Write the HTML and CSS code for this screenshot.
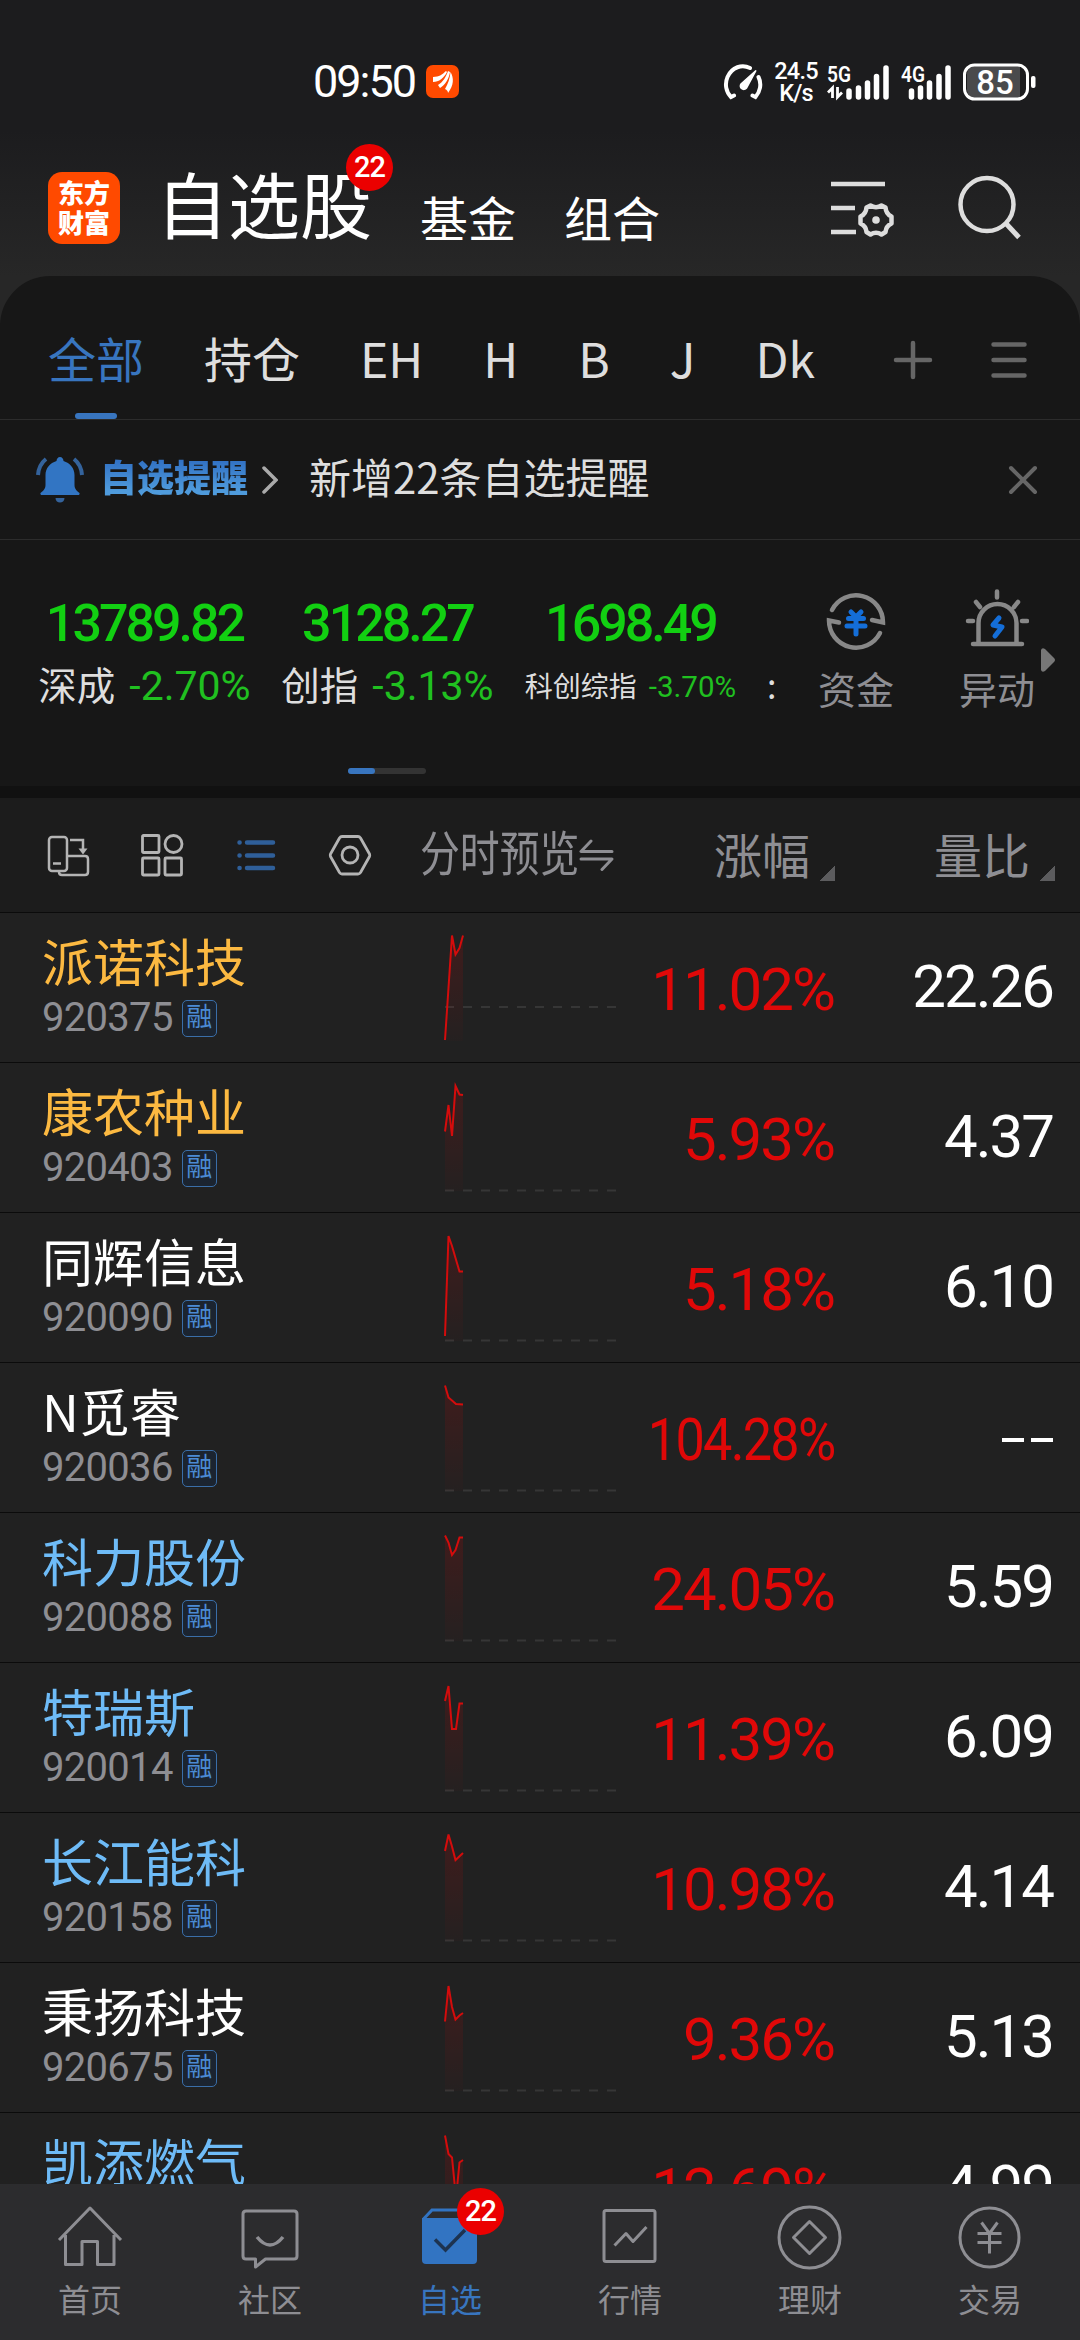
FILE: index.html
```html
<!DOCTYPE html>
<html lang="zh-CN">

<head>
    <meta charset="UTF-8">
    <meta name="viewport" content="width=device-width, initial-scale=1.0">
    <title>自选股</title>
    <link rel="stylesheet" href="styles.css">
</head>

<body>
    <div class="app">
        <div class="top">
            <div class="status-bar">
                <div class="status-time num">09:50</div>
                <svg class="status-app" width="33" height="33" viewBox="0 0 33 33">
                    <rect width="33" height="33" rx="7" fill="#ff4a00" />
                    <path d="M7 12 C13 12 17 9 20 6 L21 7 C18 13 13 17 7 17Z M12 20 C17 17 20 12 22 6 L24 7 C23 14 19 20 14 23Z M19 24 C22 19 24 13 24.500 7 C28 13 28 20 22 28 C22 26 21 25 19 24Z" fill="#fff" />
                </svg>
                <svg class="status-speed" width="40" height="36" viewBox="0 0 40 36" fill="none" stroke="#fff" stroke-width="4" stroke-linecap="round">
                    <path d="M11 31.500 L8 33 C3 28 1.500 20 4.500 13 C9 3 19 0 27 4" />
                    <path d="M35.500 13 C39 20 37 28 32.500 33 L29.500 31.500" />
                    <path d="M33 6.500 L23.500 24 A3 3 0 0 1 18 20 Z" fill="#fff" stroke-width="1.500" />
                </svg>
                <div class="net-speed num"><span>24.5</span><span>K/s</span></div>
                <svg class="signal" width="62" height="50" viewBox="0 -7 62 50">
                    <text class="signal-text" x="0" y="17.500" textLength="24" lengthAdjust="spacingAndGlyphs">5G</text>
                    <path d="M5.500 34V24L1 28.500M10.500 23v10L15 28.500" stroke="#fff" stroke-width="2.800" fill="none" />
                    <path d="M22 27v6M31.500 24v9M40.500 19v14M49.500 12.500v20.500M59 4v29" stroke="#fff" stroke-width="5.500" stroke-linecap="round" />
                </svg>
                <svg class="signal" width="50" height="50" viewBox="0 -7 50 50">
                    <text class="signal-text" x="0" y="17.500" textLength="24" lengthAdjust="spacingAndGlyphs">4G</text>
                    <path d="M10.500 27v6M19.500 24v9M28.500 19v14M38 12.500v20.500M47 4v29" stroke="#fff" stroke-width="5.500" stroke-linecap="round" />
                </svg>
                <svg class="battery" width="74" height="38" viewBox="0 0 74 38">
                    <path d="M12 3h45v32h-45a8 8 0 0 1-8-8v-16a8 8 0 0 1 8-8z" fill="#4a4a4c" />
                    <rect x="1.500" y="2" width="63" height="34" rx="10" fill="none" stroke="#fff" stroke-width="3" />
                    <rect x="68" y="13" width="4.500" height="12" rx="2" fill="#fff" />
                    <text class="battery-text" x="32" y="30.500" text-anchor="middle">85</text>
                </svg>
            </div>

            <div class="header">
                <div class="logo"><span>东方</span><span>财富</span></div>
                <div class="title">自选股<span class="badge num">22</span></div>
                <div class="sub-title">基金</div>
                <div class="sub-title">组合</div>
                <svg class="icon-filter" width="66" height="60" viewBox="0 0 66 60" fill="none" stroke="#ddd" stroke-width="4.500">
                    <path d="M0 6h54M0 30h24M0 54h25" />
                    <path d="M39.500 27.500 Q45 31 50.500 27.500 L54.500 29.500 Q55 36 60.500 38.500 L60.500 45.500 Q55 48 54.500 54 L50.500 56.500 Q45 53 39.500 56.500 L35.500 54 Q35 48 29.500 45.500 L29.500 38.500 Q35 36 35.500 29.500 Z" stroke-linejoin="round" />
                    <circle cx="45" cy="42" r="3.800" fill="#ddd" stroke="none" />
                </svg>
                <svg class="icon-search" width="64" height="66" viewBox="0 0 64 66" fill="none" stroke="#ddd" stroke-width="4.500">
                    <circle cx="29" cy="29.500" r="26.500" />
                    <path d="M48 48.500l13 14" stroke-width="5" />
                </svg>
            </div>
        </div>

        <div class="panel">
            <div class="tabs">
                <div class="tab active">全部</div>
                <div class="tab">持仓</div>
                <div class="tab">EH</div>
                <div class="tab">H</div>
                <div class="tab">B</div>
                <div class="tab">J</div>
                <div class="tab">Dk</div>
                <svg class="icon-plus" width="40" height="40" viewBox="0 0 40 40" stroke="#666" stroke-width="4.500" stroke-linecap="round">
                    <path d="M3 20h34M20 3v34" />
                </svg>
                <svg class="icon-menu" width="36" height="40" viewBox="0 0 36 40" stroke="#666" stroke-width="4.500" stroke-linecap="round">
                    <path d="M2.500 4.500h31M2.500 20h31M2.500 35.500h31" />
                </svg>
            </div>

            <div class="notice">
                <svg class="icon-bell" width="48" height="48" viewBox="0 0 48 48" fill="#3275c3">
                    <path d="M24 1 C26 1 27.500 3 27.500 5 C34 7 38.500 12 38.500 19 V29 C38.500 33 41 35 43.500 37 C44 38.500 43 39 42 39 H6 C5 39 4 38.500 4.500 37 C7 35 9.500 33 9.500 29 V19 C9.500 12 14 7 20.500 5 C20.500 3 22 1 24 1Z" />
                    <path d="M19.500 42h9c0 6-9 6-9 0z" fill="#34639c" />
                    <path d="M10 3C5 7 2.500 12 2 19M38 3c5 4 7.500 9 8 16" fill="none" stroke="#34639c" stroke-width="4" />
                </svg>
                <div class="notice-title">自选提醒</div>
                <svg class="icon-arrow" width="16" height="28" viewBox="0 0 16 28" fill="none" stroke="#aaa" stroke-width="3.500" stroke-linecap="round">
                    <path d="M2 2l12 12L2 26" />
                </svg>
                <div class="notice-text">新增22条自选提醒</div>
                <svg class="icon-close" width="30" height="30" viewBox="0 0 30 30" stroke="#666" stroke-width="4" stroke-linecap="round">
                    <path d="M3 3l24 24M27 3L3 27" />
                </svg>
            </div>

            <div class="indices">
                <div class="index-list">
                    <div class="index">
                        <div class="index-value num">13789.82</div>
                        <div class="index-info">深成<span class="num">-2.70%</span></div>
                    </div>
                    <div class="index">
                        <div class="index-value num">3128.27</div>
                        <div class="index-info">创指<span class="num">-3.13%</span></div>
                    </div>
                    <div class="index">
                        <div class="index-value num">1698.49</div>
                        <div class="index-info small">科创综指<span class="num">-3.70%</span></div>
                    </div>
                    <div class="index-cut">:</div>
                </div>
                <div class="tool">
                    <svg width="64" height="64" viewBox="0 0 64 64" fill="none" stroke="#888" stroke-width="4.500" stroke-linecap="round">
                        <path d="M8 21 A27 27 0 0 1 59 33.500 L48 31" />
                        <path d="M56 44 A27 27 0 0 1 5 31.500 L15 33.500" />
                        <path d="M27 23l5 5 5-5M24.500 29.500h15M23 37h18M32 29v16" stroke="#146ed8" stroke-width="5" />
                    </svg>
                    <span>资金</span>
                </div>
                <div class="tool">
                    <svg width="64" height="64" viewBox="0 0 64 64" fill="none" stroke="#888" stroke-width="4.500" stroke-linecap="round">
                        <path d="M13.500 53V34a19 19 0 0 1 38 0v19M8 55h49M32 2.500v6M11 13l4 5M53 13l-4 5M3 32h5M57 32h5" />
                        <path d="M34 29l-6 7 9 2-7 9" stroke="#146ed8" stroke-width="5" stroke-linejoin="round" />
                    </svg>
                    <span>异动</span>
                </div>
                <svg class="icon-more" width="16" height="26" viewBox="0 0 16 26">
                    <path d="M1 3 Q2 0 5 2 L14 11 Q16 13 14 15 L5 24 Q2 26 1 23Z" fill="#777" />
                </svg>
                <div class="pager"><div class="pager-on"></div></div>
            </div>
        </div>

        <div class="toolbar">
            <div class="views">
                <svg width="44" height="44" viewBox="0 0 44 44" fill="none" stroke="#b4b4b4" stroke-width="2.500">
                    <rect x="3" y="4" width="18" height="34" rx="3" />
                    <path d="M7 30.500h8M24 7h13v11M13 39v0q0 3 3 3h23q3 0 3-3V26q0-3-3-3H22" />
                    <path d="M32.500 15.500h9l-4.500 6z" fill="#b4b4b4" stroke="none" />
                </svg>
                <svg width="44" height="44" viewBox="0 0 44 44" fill="none" stroke="#b4b4b4" stroke-width="2.800">
                    <rect x="2.500" y="2.500" width="16.500" height="17" rx="1" />
                    <ellipse cx="33.500" cy="11" rx="8.500" ry="8.500" />
                    <rect x="2.500" y="25" width="16.500" height="17" rx="1" />
                    <rect x="25" y="25" width="16.500" height="17" rx="1" />
                </svg>
                <svg width="44" height="44" viewBox="0 0 44 44" fill="none" stroke="#2f5f99" stroke-width="4.500" stroke-linecap="round">
                    <path d="M5.500 9.500h.1M13 9.500h26M5.500 22.500h.1M13 22.500h26M5.500 35h.1M13 35h26" />
                </svg>
                <svg width="44" height="44" viewBox="0 0 44 44" fill="none" stroke="#b4b4b4" stroke-width="2.800" stroke-linejoin="round">
                    <path d="M14 3.500h16q1.500 0 2.500 1.500l9 16q.5 1.500 0 2.500l-9 16q-1 1.500-2.500 1.500H14q-1.500 0-2.500-1.500l-9-16q-.5-1.500 0-2.500l9-16q1-1.500 2.500-1.500z" />
                    <circle cx="22" cy="22" r="8" />
                </svg>
            </div>
            <div class="preview"><span>分时预览</span>
                <svg width="36" height="34" viewBox="0 0 36 34" fill="none" stroke="#8e8e93" stroke-width="3" stroke-linejoin="round" stroke-linecap="round">
                    <path d="M12 3L2 13.500h31M2 21h31L23 31.500" />
                </svg>
            </div>
            <div class="sort sort-change"><span>涨幅</span><i class="corner"></i></div>
            <div class="sort sort-ratio"><span>量比</span><i class="corner"></i></div>
        </div>

        <div class="list">
            <svg class="defs" width="0" height="0">
                <linearGradient id="fade" gradientUnits="userSpaceOnUse" x1="0" y1="22" x2="0" y2="128">
                    <stop offset="0" stop-color="#e00000" stop-opacity=".16" />
                    <stop offset="1" stop-color="#e00000" stop-opacity=".02" />
                </linearGradient>
            </svg>

            <div class="row">
                <div class="stock">
                    <div class="name orange">派诺科技</div>
                    <div class="code num">920375<span class="tag">融</span></div>
                </div>
                <svg class="chart" width="180" height="149" viewBox="440 0 180 149">
                    <path class="base" d="M445 94H617" />
                    <path class="area" d="M445 127L452 22.500L455.500 41.500L459.500 35L463 22.500V128H445Z" />
                    <path class="line" d="M445 127L452 22.500L455.500 41.500L459.500 35L463 22.500" />
                </svg>
                <div class="change num">11.02%</div>
                <div class="ratio num">22.26</div>
            </div>

            <div class="row">
                <div class="stock">
                    <div class="name orange">康农种业</div>
                    <div class="code num">920403<span class="tag">融</span></div>
                </div>
                <svg class="chart" width="180" height="149" viewBox="440 0 180 149">
                    <path class="base" d="M445 127.500H617" />
                    <path class="area" d="M445 68.500L448.500 42L452 73L455.500 23L459.500 31.500L463 32V128H445Z" />
                    <path class="line" d="M445 68.500L448.500 42L452 73L455.500 23L459.500 31.500L463 32" />
                </svg>
                <div class="change num">5.93%</div>
                <div class="ratio num">4.37</div>
            </div>

            <div class="row">
                <div class="stock">
                    <div class="name">同辉信息</div>
                    <div class="code num">920090<span class="tag">融</span></div>
                </div>
                <svg class="chart" width="180" height="149" viewBox="440 0 180 149">
                    <path class="base" d="M445 127.500H617" />
                    <path class="area" d="M445 123L448.500 23L452 33L455.500 45L459.500 58.500H463V128H445Z" />
                    <path class="line" d="M445 123L448.500 23L452 33L455.500 45L459.500 58.500H463" />
                </svg>
                <div class="change num">5.18%</div>
                <div class="ratio num">6.10</div>
            </div>

            <div class="row">
                <div class="stock">
                    <div class="name">N觅睿</div>
                    <div class="code num">920036<span class="tag">融</span></div>
                </div>
                <svg class="chart" width="180" height="149" viewBox="440 0 180 149">
                    <path class="base" d="M445 127.500H617" />
                    <path class="area" d="M445 22.500L448.500 34.500L452 37.500L456 41L463 41.500V128H445Z" />
                    <path class="line" d="M445 22.500L448.500 34.500L452 37.500L456 41L463 41.500" />
                </svg>
                <div class="change num"><span class="narrow">104.28%</span></div>
                <div class="ratio num dashes"><i></i><i></i></div>
            </div>

            <div class="row">
                <div class="stock">
                    <div class="name blue">科力股份</div>
                    <div class="code num">920088<span class="tag">融</span></div>
                </div>
                <svg class="chart" width="180" height="149" viewBox="440 0 180 149">
                    <path class="base" d="M445 127.500H617" />
                    <path class="area" d="M445 22.500L448.500 29.500L452 42L455.500 37L459.500 24.500H463V128H445Z" />
                    <path class="line" d="M445 22.500L448.500 29.500L452 42L455.500 37L459.500 24.500H463" />
                </svg>
                <div class="change num">24.05%</div>
                <div class="ratio num">5.59</div>
            </div>

            <div class="row">
                <div class="stock">
                    <div class="name blue">特瑞斯</div>
                    <div class="code num">920014<span class="tag">融</span></div>
                </div>
                <svg class="chart" width="180" height="149" viewBox="440 0 180 149">
                    <path class="base" d="M445 127.500H617" />
                    <path class="area" d="M445 38L448.500 23L452 66H456L459.500 40.500H463V128H445Z" />
                    <path class="line" d="M445 38L448.500 23L452 66H456L459.500 40.500H463" />
                </svg>
                <div class="change num">11.39%</div>
                <div class="ratio num">6.09</div>
            </div>

            <div class="row">
                <div class="stock">
                    <div class="name blue">长江能科</div>
                    <div class="code num">920158<span class="tag">融</span></div>
                </div>
                <svg class="chart" width="180" height="149" viewBox="440 0 180 149">
                    <path class="base" d="M445 127.500H617" />
                    <path class="area" d="M445 38L448.500 21.500L452 33.500L455.500 47L463 40V128H445Z" />
                    <path class="line" d="M445 38L448.500 21.500L452 33.500L455.500 47L463 40" />
                </svg>
                <div class="change num">10.98%</div>
                <div class="ratio num">4.14</div>
            </div>

            <div class="row">
                <div class="stock">
                    <div class="name">秉扬科技</div>
                    <div class="code num">920675<span class="tag">融</span></div>
                </div>
                <svg class="chart" width="180" height="149" viewBox="440 0 180 149">
                    <path class="base" d="M445 127.500H617" />
                    <path class="area" d="M445 58.500L448.500 23L452 44L455.500 56.500L459.500 52.500L463 50V128H445Z" />
                    <path class="line" d="M445 58.500L448.500 23L452 44L455.500 56.500L459.500 52.500L463 50" />
                </svg>
                <div class="change num">9.36%</div>
                <div class="ratio num">5.13</div>
            </div>

            <div class="row">
                <div class="stock">
                    <div class="name blue">凯添燃气</div>
                </div>
                <svg class="chart" width="180" height="149" viewBox="440 0 180 149">
                    <path class="area" d="M445 22.500L448.500 41L452 44.500L455 75H457L459.500 49.500L463 47V128H445Z" />
                    <path class="line" d="M445 22.500L448.500 41L452 44.500L455 75H457L459.500 49.500L463 47" />
                </svg>
                <div class="change num">12.69%</div>
                <div class="ratio num">4.99</div>
            </div>
        </div>

        <div class="nav">
            <div class="nav-item">
                <svg width="66" height="66" viewBox="0 0 66 66" fill="none" stroke="#8e8e93" stroke-width="3">
                    <path d="M2 36L33 4l31 32M8.500 31v29.500h16.500v-23h15.500v23h16.500V31" stroke-linejoin="round" />
                </svg>
                <span>首页</span>
            </div>
            <div class="nav-item">
                <svg width="66" height="66" viewBox="0 0 66 66" fill="none" stroke="#8e8e93" stroke-width="3" stroke-linejoin="round">
                    <path d="M9 7h48q3 0 3 3v42q0 3-3 3H28.500l-10 8v-8H9q-3 0-3-3v-42q0-3 3-3z" />
                    <path d="M20 33q13 16 26 0" stroke-width="3.500" />
                </svg>
                <span>社区</span>
            </div>
            <div class="nav-item active">
                <svg width="66" height="66" viewBox="0 0 66 66">
                    <path d="M6.500 15L15 6h44v9" fill="none" stroke="#3274c2" stroke-width="3" />
                    <path d="M5 14h55v42q0 4-4 4H9q-4 0-4-4z" fill="#3274c2" />
                    <path d="M18 35.500l10.500 10.500L48 26" fill="none" stroke="#1d3350" stroke-width="3.500" />
                </svg>
                <span>自选</span>
                <b class="badge num">22</b>
            </div>
            <div class="nav-item">
                <svg width="66" height="66" viewBox="0 0 66 66" fill="none" stroke="#8e8e93" stroke-width="3" stroke-linejoin="round">
                    <rect x="7" y="6.500" width="51" height="51" rx="2" />
                    <path d="M17.500 41.500l11.500-12 7 8L49.500 23" />
                </svg>
                <span>行情</span>
            </div>
            <div class="nav-item">
                <svg width="66" height="66" viewBox="0 0 66 66" fill="none" stroke="#8e8e93" stroke-width="3" stroke-linejoin="round">
                    <circle cx="32.500" cy="33.500" r="30.500" />
                    <path d="M32.500 17.500L48.500 33.500L32.500 49.500L16.500 33.500Z" />
                </svg>
                <span>理财</span>
            </div>
            <div class="nav-item">
                <svg width="66" height="66" viewBox="0 0 66 66" fill="none" stroke="#8e8e93" stroke-width="3">
                    <circle cx="32.500" cy="33.500" r="29.500" />
                    <path d="M24.500 18.500l8 11 8-11M20.500 29.500h24M20.500 38.500h24M32.500 29.500v20" />
                </svg>
                <span>交易</span>
            </div>
        </div>
    </div>
</body>

</html>
```
FILE: styles.css
```css
* {
    box-sizing: border-box;
}

body {
    margin: 0;
    background-color: #212121;
    color: #dedede;
    font-family: "Noto Sans CJK SC", sans-serif;
}

svg {
    display: block;
    flex: none;
}

.num {
    font-family: Roboto, "Noto Sans CJK SC", sans-serif;
}

.app {
    width: 1080px;
    height: 2340px;
    display: flex;
    flex-direction: column;
    overflow: hidden;
}

/* status bar + header */
.top {
    height: 326px;
    margin-bottom: -50px;
    flex: none;
    background: linear-gradient(#1c1c1e 0, #1c1c1e 130px, #272727 276px);
}

.status-bar {
    height: 140px;
    padding: 23px 0 0 313px;
    display: flex;
    align-items: center;
    color: #fff;
}

.status-time {
    width: 113px;
    font-size: 45px;
    letter-spacing: -2px;
}

.status-speed {
    margin-left: 264px;
}

.net-speed {
    width: 48px;
    margin: 0 7px 0 9px;
    display: flex;
    flex-direction: column;
    align-items: center;
    font-size: 23.500px;
    font-weight: 500;
    line-height: 22px;
    letter-spacing: -0.800px;
}

.signal {
    margin-right: 12px;
}

.signal-text,
.battery-text {
    font-family: Roboto, sans-serif;
    font-weight: 600;
    font-size: 22px;
    fill: #fff;
}

.battery-text {
    font-size: 33px;
    font-weight: 500;
}

.header {
    height: 136px;
    padding-left: 48px;
    display: flex;
    align-items: center;
    color: #fff;
}

.logo {
    width: 72px;
    height: 72px;
    margin-right: 36px;
    border-radius: 14px;
    background-color: #ff4a00;
    display: flex;
    flex-direction: column;
    align-items: center;
    justify-content: center;
    font-size: 26px;
    font-weight: 900;
    line-height: 30px;
}

.logo span {
    position: relative;
    top: -1px;
}

.title {
    position: relative;
    font-size: 72px;
    line-height: 80px;
    margin-top: -13px;
}

.badge {
    position: absolute;
    width: 47px;
    height: 47px;
    border-radius: 50%;
    background-color: #eb0000;
    color: #fff;
    font-size: 29px;
    font-weight: 500;
    line-height: 47px;
    text-align: center;
    letter-spacing: -1px;
}

.title .badge {
    left: 190px;
    top: -18px;
}

.sub-title {
    margin: 16px 0 0 48px;
    font-size: 48px;
    line-height: 60px;
}

.icon-filter {
    margin-left: 171px;
}

.icon-search {
    margin-left: 61px;
}

/* dark panel */
.panel {
    position: relative;
    height: 510px;
    flex: none;
    border-radius: 50px 50px 0 0;
    background-color: #171717;
}

.tabs {
    height: 144px;
    padding-left: 48px;
    display: flex;
    align-items: center;
    gap: 60px;
    border-bottom: 1px solid #2c2c2c;
    font-size: 48px;
}

.tab {
    position: relative;
    height: 143px;
    line-height: 162px;
}

.tab.active {
    color: #3875bf;
}

.tab.active::after {
    content: "";
    position: absolute;
    left: 27px;
    bottom: 0;
    width: 42px;
    height: 6px;
    border-radius: 3px;
    background-color: #3875bf;
}

.icon-plus {
    margin: 24px 0 0 18px;
}

.icon-menu {
    margin: 24px 0 0 -2px;
}

.notice {
    height: 120px;
    padding-left: 36px;
    display: flex;
    align-items: center;
    border-bottom: 1px solid #2c2c2c;
}

.notice-title {
    margin: -7px 0 0 16px;
    font-size: 37px;
    font-weight: 900;
    line-height: 50px;
    background: linear-gradient(#3272c4 20%, #4f9bdc 80%);
    background-clip: text;
    -webkit-background-clip: text;
    color: transparent;
}

.icon-arrow {
    margin-left: 14px;
}

.notice-text {
    width: 699px;
    margin: -8px 0 0 31px;
    font-size: 42px;
}

.indices {
    height: 246px;
    padding-left: 23px;
    display: flex;
    align-items: flex-start;
    position: relative;
}

.index-list {
    width: 758px;
    flex: none;
    display: flex;
}

.index {
    width: 243px;
    flex: none;
    padding-top: 54px;
    text-align: center;
}

.index-value {
    font-size: 52px;
    font-weight: 500;
    line-height: 60px;
    letter-spacing: -3px;
    color: #12d012;
}

.index-info {
    height: 60px;
    margin-top: -1px;
    line-height: 60px;
    font-size: 38.500px;
    white-space: nowrap;
}

.index-info .num {
    margin-left: 14px;
    font-size: 41px;
    color: #20c020;
}

.index-info.small {
    font-size: 28px;
    line-height: 64px;
}

.index-info.small .num {
    margin-left: 12px;
    font-size: 29.500px;
}

.index-cut {
    padding: 123px 0 0 15px;
    font-size: 34px;
    line-height: 44px;
}

.tool {
    width: 141px;
    flex: none;
    padding: 49px 0 0 9px;
    display: flex;
    flex-direction: column;
    align-items: center;
    font-size: 38px;
    line-height: 56px;
    color: #8e8e93;
}

.tool span {
    margin-top: 7px;
}

.icon-more {
    position: absolute;
    left: 1040px;
    top: 107px;
}

.pager {
    position: absolute;
    left: 348px;
    top: 228px;
    width: 78px;
    height: 6px;
    border-radius: 3px;
    background-color: #333;
}

.pager-on {
    width: 27px;
    height: 6px;
    border-radius: 3px;
    background-color: #3875bf;
}

/* list head */
.toolbar {
    height: 127px;
    flex: none;
    display: flex;
    align-items: center;
    border-top: 12px solid #111;
    border-bottom: 1px solid #0b0b0b;
    background-color: #1c1c1c;
    color: #8e8e93;
    font-size: 48px;
}

.views {
    width: 420px;
    padding-left: 46px;
    display: flex;
    gap: 50px;
}

.preview {
    width: 200px;
    display: flex;
    align-items: center;
}

.preview span {
    width: 159px;
    margin-top: -10px;
    flex: none;
    white-space: nowrap;
    transform: scaleX(0.83);
    transform-origin: left;
}

.sort {
    display: flex;
    justify-content: flex-end;
    align-items: flex-end;
    line-height: 68px;
}

.sort span {
    margin-bottom: 5px;
}

.sort-change {
    width: 215px;
}

.sort-ratio {
    width: 220px;
}

.corner {
    width: 15px;
    height: 15px;
    margin: 0 0 11px 10px;
    background: linear-gradient(135deg, transparent 50%, #5c5c5e 50%);
}

/* stock rows */
.list {
    flex: 1;
    overflow: hidden;
    background-color: #212121;
}

.defs {
    position: absolute;
}

.row {
    height: 150px;
    display: flex;
    border-bottom: 1px solid #0b0b0b;
}

.stock {
    width: 440px;
    padding: 17px 0 0 42px;
}

.name {
    font-size: 51px;
    line-height: 60px;
    color: #fff;
}

.name.orange {
    color: #fcb941;
}

.name.blue {
    color: #6ebbf7;
}

.code {
    height: 40px;
    margin-top: 8px;
    display: flex;
    align-items: center;
    gap: 9px;
    font-size: 40px;
    letter-spacing: -0.700px;
    line-height: 40px;
    color: #8e8e93;
}

.tag {
    width: 35px;
    height: 37px;
    border: 1.500px solid #3a6ea8;
    border-radius: 5px;
    background-color: #1b2430;
    color: #4b8bd4;
    font-size: 26px;
    letter-spacing: 0;
    line-height: 33px;
    text-align: center;
}

.base {
    stroke: #363636;
    stroke-width: 2;
    stroke-dasharray: 9 9;
}

.area {
    fill: url(#fade);
}

.line {
    fill: none;
    stroke: #d40c0c;
    stroke-width: 2;
}

.change,
.ratio {
    font-size: 60px;
    letter-spacing: -2px;
    text-align: right;
}

.change {
    width: 214px;
    line-height: 153px;
    color: #e00808;
}

.narrow {
    display: inline-block;
    transform: scaleX(0.87);
    transform-origin: right;
}

.ratio {
    width: 219px;
    line-height: 147px;
    color: #fff;
}

.dashes {
    display: flex;
    justify-content: flex-end;
    gap: 7px;
    padding-top: 75px;
}

.dashes i {
    width: 22px;
    height: 4px;
    background-color: #fff;
}

/* bottom navigation */
.nav {
    height: 156px;
    flex: none;
    display: flex;
    background-color: #2c2c2e;
    color: #8e8e93;
}

.nav-item {
    position: relative;
    width: 180px;
    padding-top: 20px;
    display: flex;
    flex-direction: column;
    align-items: center;
    font-size: 32px;
    line-height: 48px;
}

.nav-item span {
    margin-top: 4px;
}

.nav-item.active {
    color: #3875bf;
}

.nav-item .badge {
    left: 97px;
    top: 4px;
}
```
